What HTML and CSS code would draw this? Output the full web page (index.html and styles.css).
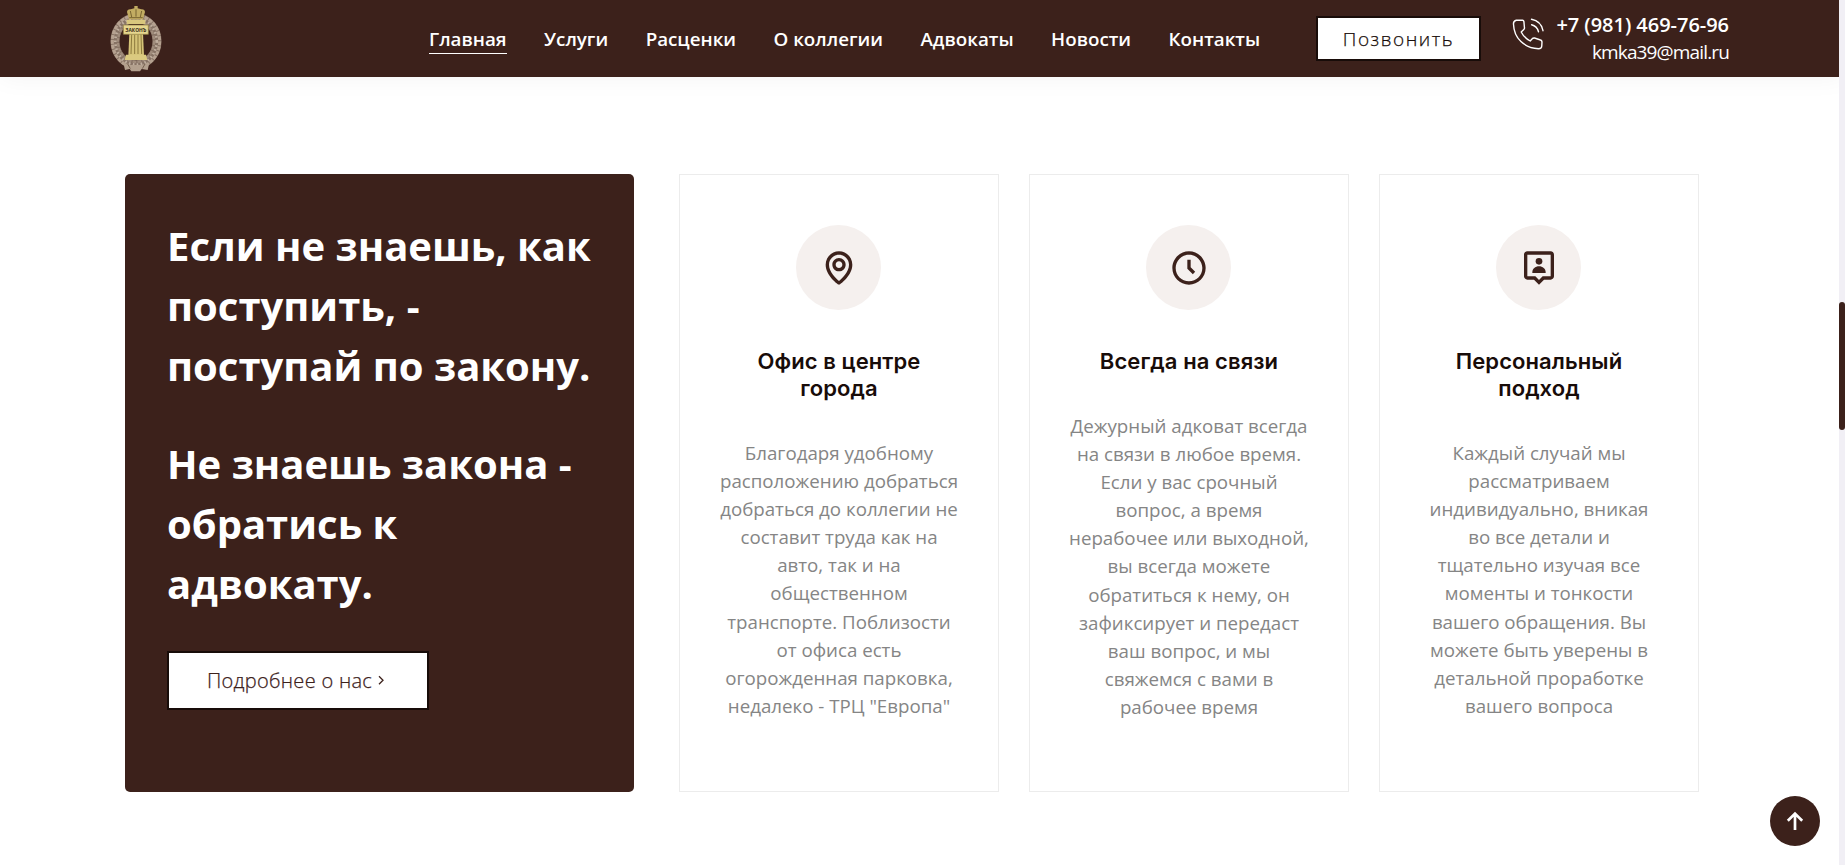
FILE: index.html
```html
<!DOCTYPE html>
<html lang="ru">
<head>
<meta charset="utf-8">
<title>Коллегия адвокатов</title>
<link rel="stylesheet" href="styles.css">
</head>
<body>
<header class="header">
  <a class="logo" href="#">
    <svg width="52" height="67" viewBox="60 15 156 201">
      <ellipse cx="138" cy="124" rx="63" ry="70" fill="none" stroke="#877365" stroke-width="27"/>
      <ellipse cx="138" cy="124" rx="71" ry="78" fill="none" stroke="#b5a190" stroke-width="9" stroke-dasharray="12 3"/>
      <ellipse cx="138" cy="124" rx="62" ry="70" fill="none" stroke="#bfae9e" stroke-width="8" stroke-dasharray="5 7"/>
      <ellipse cx="138" cy="124" rx="54" ry="62" fill="none" stroke="#a08c7c" stroke-width="7" stroke-dasharray="11 4"/>
      <path d="M100 188l20 7h38l20-7-5 22-18-3-5 7h-26l-5-7-14 3z" fill="#b3a08e"/>
      <path d="M113 192l8 14M165 192l-8 14" stroke="#75604f" stroke-width="3"/>
      <path d="M117 58L111 36Q112 27 122 28L133 25V18h10v7l11 3q10-1 11 8l-6 22z" fill="#c2ac62"/>
      <path d="M121 33l4 18M138 28v22M155 33l-4 18M118 53h40" stroke="#776330" stroke-width="3" fill="none"/>
      <path d="M110 59h56v13h-56z" fill="#d9c77d"/>
      <path d="M118 100h41l3 68h-47z" fill="#d6c478"/>
      <path d="M125 104l-2 58M134 104v58M144 104v58M153 104l2 58" stroke="#8d7a3d" stroke-width="3"/>
      <path d="M108 164h60l4 16h-68z" fill="#dbca80"/>
      <path d="M100 75h75v28h-75z" fill="#e6d68e" stroke="#8d7a3d" stroke-width="2"/>
      <text x="137.500" y="95" class="logo-text" textLength="63" lengthAdjust="spacingAndGlyphs">ЗАКОНЪ</text>
    </svg>
  </a>
  <nav class="nav">
    <a class="active" href="#">Главная</a>
    <a href="#">Услуги</a>
    <a href="#">Расценки</a>
    <a href="#">О коллегии</a>
    <a href="#">Адвокаты</a>
    <a href="#">Новости</a>
    <a href="#">Контакты</a>
  </nav>
  <a class="call" href="#">Позвонить</a>
  <div class="contacts">
    <svg class="phone" width="32" height="32" viewBox="0 0 32 32" fill="none" stroke="#fff" stroke-width="1.400" stroke-linejoin="round" stroke-linecap="round">
      <path d="M10.600 2.300L4.300 2.300Q1.200 3 1.500 6.200C2 20.500 12.500 30 26.500 30.700Q29.800 30.700 29.800 27.500L30 23.800Q29.800 22.400 28.500 22L22.500 20Q21 19.800 20.200 20.800L18.200 23C13.800 20.700 11.300 18.200 9.200 14L11.800 11.600Q12.800 10.700 12.400 9.300L11.900 3.500Q11.600 2.500 10.600 2.300Z"/>
      <path d="M19.500 1.300Q29 3 31 12.700M19.600 6.800Q25 8.200 26.500 13.700"/>
    </svg>
    <div class="contact-text">
      <a class="tel" href="#">+7 (981) 469-76-96</a>
      <a class="mail" href="#">kmka39@mail.ru</a>
    </div>
  </div>
</header>

<main class="why">
  <section class="slogan">
    <p>Если не знаешь, как<br>поступить, -<br>поступай по закону.</p>
    <p>Не знаешь закона -<br>обратись к<br>адвокату.</p>
    <a class="more" href="#"><span>Подробнее о нас</span>
      <svg width="7" height="11" viewBox="0 0 7 11" fill="none" stroke="#3c211b" stroke-width="1.300"><path d="M1 1.200L5 5.200L1 9.200"/></svg>
    </a>
  </section>
  <div class="cards">
    <article class="card">
      <span class="icon"><svg viewBox="0 0 24 24"><path d="M12 14c2.206 0 4-1.794 4-4s-1.794-4-4-4-4 1.794-4 4 1.794 4 4 4zm0-6c1.103 0 2 .897 2 2s-.897 2-2 2-2-.897-2-2 .897-2 2-2z"/><path d="M11.420 21.814a.998.998 0 0 0 1.160 0C12.884 21.599 20.029 16.440 20 10c0-4.411-3.589-8-8-8S4 5.589 4 9.995c-.029 6.445 7.116 11.604 7.420 11.819zM12 4c3.309 0 6 2.691 6 6 .021 4.438-4.388 8.423-6 9.730-1.611-1.308-6.021-5.294-6-9.735 0-3.304 2.691-5.995 6-5.995z"/></svg></span>
      <h4>Офис в центре<br>города</h4>
      <p>Благодаря удобному<br>расположению добраться<br>добраться до коллегии не<br>составит труда как на<br>авто, так и на<br>общественном<br>транспорте. Поблизости<br>от офиса есть<br>огорожденная парковка,<br>недалеко - ТРЦ "Европа"</p>
    </article>
    <article class="card">
      <span class="icon"><svg viewBox="0 0 24 24"><path d="M12 2C6.486 2 2 6.486 2 12s4.486 10 10 10 10-4.486 10-10S17.514 2 12 2zm0 18c-4.411 0-8-3.589-8-8s3.589-8 8-8 8 3.589 8 8-3.589 8-8 8z"/><path d="M13 7h-2v5.414l3.293 3.293 1.414-1.414L13 11.586z"/></svg></span>
      <h4>Всегда на связи</h4>
      <p>Дежурный адковат всегда<br>на связи в любое время.<br>Если у вас срочный<br>вопрос, а время<br>нерабочее или выходной,<br>вы всегда можете<br>обратиться к нему, он<br>зафиксирует и передаст<br>ваш вопрос, и мы<br>свяжемся с вами в<br>рабочее время</p>
    </article>
    <article class="card">
      <span class="icon"><svg viewBox="0 0 24 24"><path d="M12 22l3-3h4c1.103 0 2-.897 2-2V4c0-1.103-.897-2-2-2H5c-1.103 0-2 .897-2 2v13c0 1.103.897 2 2 2h4l3 3zM5 4h14v13h-4.828L12 19.172 9.828 17H5V4z"/><circle cx="12" cy="8" r="2"/><path d="M12 11c-2.200 0-4 1.500-4 3.600V15h8v-.400c0-2.100-1.800-3.600-4-3.600z"/></svg></span>
      <h4>Персональный<br>подход</h4>
      <p>Каждый случай мы<br>рассматриваем<br>индивидуально, вникая<br>во все детали и<br>тщательно изучая все<br>моменты и тонкости<br>вашего обращения. Вы<br>можете быть уверены в<br>детальной проработке<br>вашего вопроса</p>
    </article>
  </div>
</main>

<a class="to-top" href="#"><svg width="18" height="20" viewBox="0 0 18 20" fill="none" stroke="#fff" stroke-width="2.700"><path d="M9 19V3M1.800 9.800L9 2.600L16.200 9.800"/></svg></a>
<div class="scroll-track"><div class="scroll-thumb"></div></div>
</body>
</html>
```
FILE: styles.css
```css
* { box-sizing: border-box; }
body {
  margin: 0;
  height: 865px;
  overflow: hidden;
  background: #fff;
  font-family: "Open Sans", "Noto Sans", sans-serif;
}
a { color: inherit; text-decoration: none; white-space: nowrap; }
svg { display: block; }

.header {
  display: flex;
  align-items: flex-start;
  height: 77px;
  padding-left: 110px;
  background: #3c211b;
  color: #fff;
  box-shadow: 0 0 25px rgba(0, 0, 0, 0.05);
}
.logo { width: 319px; padding-top: 5px; }
.logo-text { font: 700 16px "Open Sans", sans-serif; text-anchor: middle; fill: #3a2b17; }
.nav {
  display: flex;
  gap: 37.500px;
  width: 887px;
  padding-top: 26px;
  font-size: 18.780px;
  font-weight: 600;
  line-height: 27px;
}
.nav a { height: 28px; border-bottom: 1px solid transparent; }
.nav .active { border-color: #fff; }
.call {
  width: 165px;
  height: 45px;
  margin-top: 16px;
  border: 2px solid #180c09;
  background: #fff;
  color: #180c09;
  font-size: 19px;
  font-weight: 300;
  line-height: 42px;
  letter-spacing: 1.550px;
  text-align: center;
  -webkit-text-stroke: 0.250px #180c09;
}
.contacts { display: flex; justify-content: space-between; width: 217px; margin-left: 31px; }
.phone { margin-top: 18px; }
.contact-text { display: flex; flex-direction: column; align-items: flex-end; padding-top: 11px; line-height: 27px; }
.tel { font-size: 20px; font-weight: 600; letter-spacing: -0.030px; }
.mail { font-size: 19px; line-height: 29px; letter-spacing: -0.850px; }

.why { display: flex; gap: 45px; padding: 97px 0 0 125px; }
.slogan {
  width: 509px;
  height: 618px;
  padding: 42px 0 0 42px;
  border-radius: 5px;
  background: #3c211b;
  color: #fff;
}
.slogan p { margin: 0 0 38px; font-size: 40px; font-weight: 700; line-height: 60px; white-space: nowrap; }
.more {
  display: flex;
  align-items: center;
  gap: 6px;
  width: 262px;
  height: 59px;
  margin-top: -1px;
  padding-left: 38px;
  border: 2px solid #180c09;
  background: #fff;
  color: #3c211b;
  font-size: 20px;
  font-weight: 300;
  letter-spacing: 0.300px;
  -webkit-text-stroke: 0.250px #3c211b;
}
.cards { display: grid; grid-template-columns: repeat(3, 320px); gap: 30px; }
.card {
  display: flex;
  flex-direction: column;
  align-items: center;
  height: 618px;
  padding-top: 50px;
  border: 1px solid #ececec;
  background: #fff;
  text-align: center;
}
.icon { display: flex; align-items: center; justify-content: center; width: 85px; height: 85px; margin-right: 1px; border-radius: 50%; background: #f5f0ee; }
.icon svg { width: 40px; height: 40px; fill: #3c211b; }
.card h4 { margin: 38px 0 0; color: #180c09; font: 600 22px/27px Inter, sans-serif; letter-spacing: 0.080px; white-space: nowrap; }
.card p { margin: 37px 0 0; color: #858585; font-size: 18.720px; line-height: 28.100px; white-space: nowrap; }

.to-top {
  position: fixed;
  right: 25px;
  bottom: 19px;
  display: flex;
  align-items: center;
  justify-content: center;
  width: 50px;
  height: 50px;
  border-radius: 50%;
  background: #3c211b;
}
.scroll-track { position: fixed; top: 0; right: 0; width: 6px; height: 100%; padding-top: 302px; background: #f1eff5; }
.scroll-thumb { height: 128px; border-radius: 3px; background: #3c211b; }
```
